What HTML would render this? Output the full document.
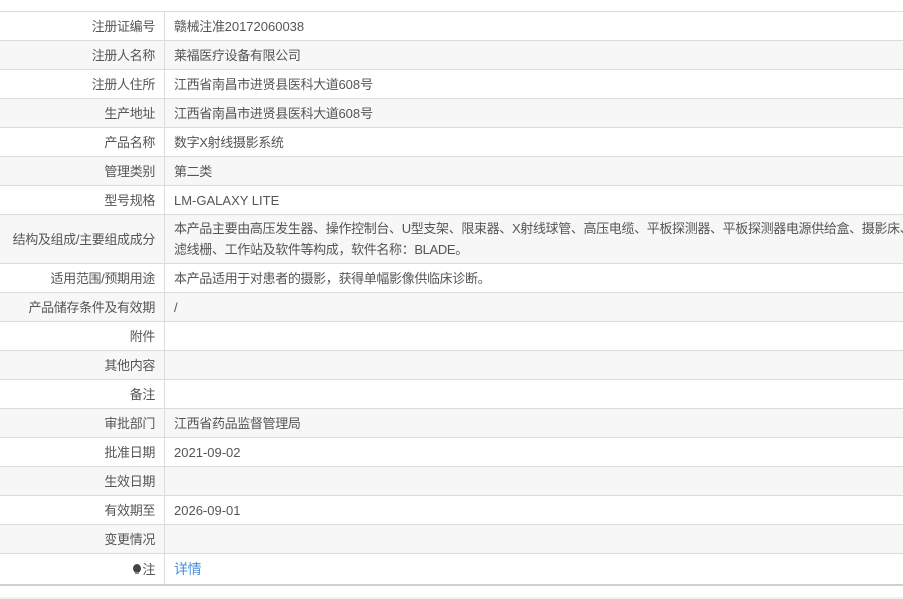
<!DOCTYPE html>
<html><head><meta charset="utf-8"><style>
*{margin:0;padding:0;box-sizing:border-box}
body{width:903px;height:599px;overflow:hidden;background:#fff;font-family:"Liberation Sans","Noto Sans CJK SC",sans-serif;font-size:13px;color:#555;position:relative;letter-spacing:-0.35px}
.r{position:absolute;left:0;width:903px;border-bottom:1px solid #dcdcdc;overflow:hidden}
.g{background:#f7f7f7}
.l{position:absolute;left:0;top:0;bottom:0;width:165px;border-right:1px solid #dcdcdc;padding-right:9px;padding-bottom:2px;display:flex;align-items:center;justify-content:flex-end;white-space:nowrap}
.v{position:absolute;left:174px;top:0;bottom:0;display:flex;align-items:center;white-space:nowrap;line-height:21px}
.n{letter-spacing:0}
a{color:#4a90d9;text-decoration:none;font-size:14px}
.b{display:inline-block;width:8px;height:9px;background:#444;border-radius:50%;margin-right:1px;position:relative}
.b:after{content:"";position:absolute;left:2px;top:8px;width:4px;height:2px;background:#888}
</style></head><body>
<div class="r" style="top:0;height:12px"></div>
<div class="r" style="top:12px;height:29px"><div class="l">注册证编号</div><div class="v">赣械注准<span class="n">20172060038</span></div></div>
<div class="r g" style="top:41px;height:29px"><div class="l">注册人名称</div><div class="v">莱福医疗设备有限公司</div></div>
<div class="r" style="top:70px;height:29px"><div class="l">注册人住所</div><div class="v">江西省南昌市进贤县医科大道<span class="n">608</span>号</div></div>
<div class="r g" style="top:99px;height:29px"><div class="l">生产地址</div><div class="v">江西省南昌市进贤县医科大道<span class="n">608</span>号</div></div>
<div class="r" style="top:128px;height:29px"><div class="l">产品名称</div><div class="v">数字X射线摄影系统</div></div>
<div class="r g" style="top:157px;height:29px"><div class="l">管理类别</div><div class="v">第二类</div></div>
<div class="r" style="top:186px;height:29px"><div class="l">型号规格</div><div class="v n">LM-GALAXY LITE</div></div>
<div class="r g" style="top:215px;height:49px"><div class="l">结构及组成/主要组成成分</div><div class="v">本产品主要由高压发生器、操作控制台、U型支架、限束器、X射线球管、高压电缆、平板探测器、平板探测器电源供给盒、摄影床、<br>滤线栅、工作站及软件等构成，软件名称：BLADE。</div></div>
<div class="r" style="top:264px;height:29px"><div class="l">适用范围/预期用途</div><div class="v">本产品适用于对患者的摄影，获得单幅影像供临床诊断。</div></div>
<div class="r g" style="top:293px;height:29px"><div class="l">产品储存条件及有效期</div><div class="v">/</div></div>
<div class="r" style="top:322px;height:29px"><div class="l">附件</div></div>
<div class="r g" style="top:351px;height:29px"><div class="l">其他内容</div></div>
<div class="r" style="top:380px;height:29px"><div class="l">备注</div></div>
<div class="r g" style="top:409px;height:29px"><div class="l">审批部门</div><div class="v">江西省药品监督管理局</div></div>
<div class="r" style="top:438px;height:29px"><div class="l">批准日期</div><div class="v n">2021-09-02</div></div>
<div class="r g" style="top:467px;height:29px"><div class="l">生效日期</div></div>
<div class="r" style="top:496px;height:29px"><div class="l">有效期至</div><div class="v n">2026-09-01</div></div>
<div class="r g" style="top:525px;height:29px"><div class="l">变更情况</div></div>
<div class="r" style="top:554px;height:32px;border-bottom:2px solid #d0d0d0"><div class="l"><span class="b"></span>注</div><div class="v"><a>详情</a></div></div>
<div style="position:absolute;top:597px;left:0;width:903px;height:2px;background:#f0f0f0"></div>
</body></html>
